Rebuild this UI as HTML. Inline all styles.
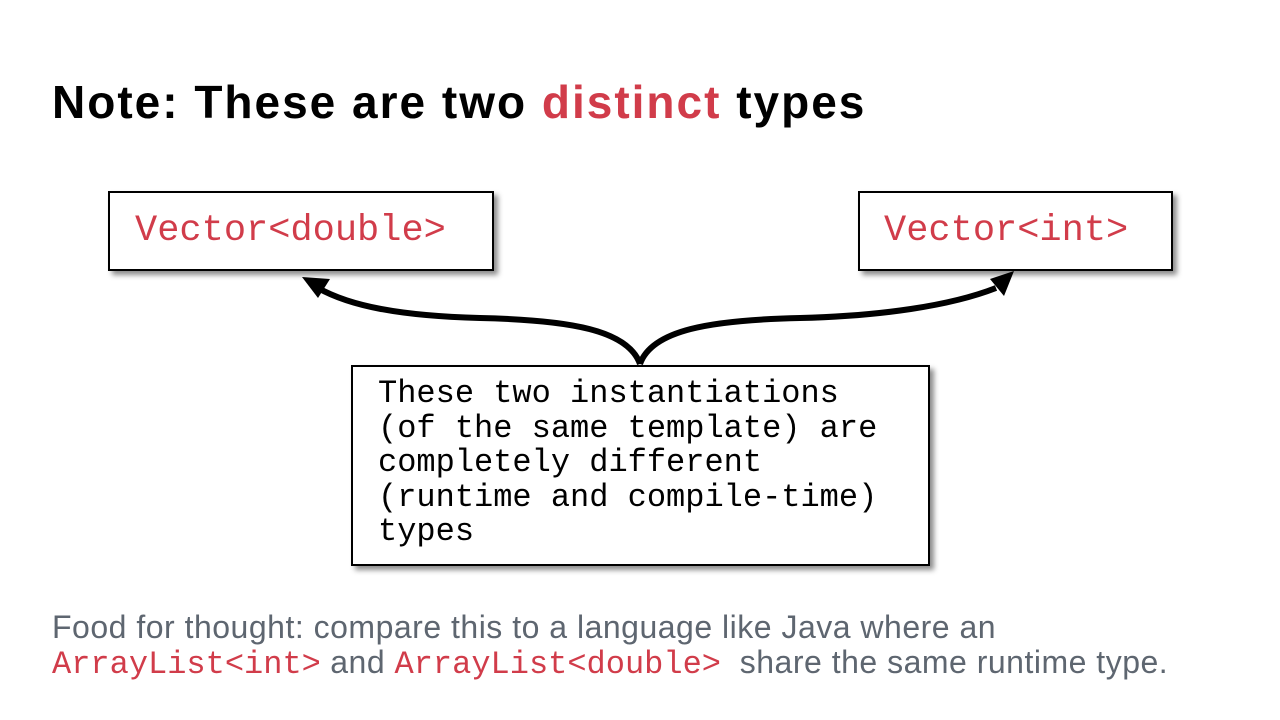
<!DOCTYPE html>
<html><head><style>
body{margin:0;width:1280px;height:720px;background:#fff;position:relative;overflow:hidden;font-family:"Liberation Sans",sans-serif}
.t{position:absolute;left:52px;top:75px;font-size:46px;font-weight:bold;color:#000;white-space:nowrap;letter-spacing:2px}
.box{position:absolute;border:2px solid #000;background:#fff;box-shadow:4px 4px 5px rgba(0,0,0,.45);box-sizing:border-box}
.m{font-family:"Liberation Mono",monospace}
.red{color:#d13c4a}
.f{position:absolute;left:52px;top:610px;font-size:32px;color:#5e6670;line-height:35px;white-space:nowrap;letter-spacing:0.5px}
.f .m{letter-spacing:0}
</style></head><body>
<div class="t">Note: These are two <span class="red">distinct</span> types</div>
<svg width="1280" height="720" style="position:absolute;left:0;top:0">
<path d="M640,364 C628,330 570,320 480,318 C400,316 350,306 318,288" fill="none" stroke="#000" stroke-width="6"/>
<path d="M640,364 C652,330 710,320 800,318 C880,316 950,306 996,288" fill="none" stroke="#000" stroke-width="6"/>
<polygon points="302,277 330,279 318,298" fill="#000"/>
<polygon points="1014,271 1004,296 990,279" fill="#000"/>
</svg>
<div class="box" style="left:108px;top:191px;width:386px;height:80px"><div class="m red" style="position:absolute;left:25px;top:17px;font-size:37px">Vector&lt;double&gt;</div></div>
<div class="box" style="left:858px;top:191px;width:315px;height:80px"><div class="m red" style="position:absolute;left:24px;top:17px;font-size:37px">Vector&lt;int&gt;</div></div>
<div class="box" style="left:351px;top:365px;width:579px;height:201px"><div class="m" style="position:absolute;left:25px;top:10px;font-size:32px;line-height:34.5px;white-space:pre">These two instantiations
(of the same template) are
completely different
(runtime and compile-time)
types</div></div>
<div class="f">Food for thought: compare this to a language like Java where an<br><span class="m red" style="font-size:32px">ArrayList&lt;int&gt;</span> and <span class="m red" style="font-size:32px">ArrayList&lt;double&gt;</span>&nbsp; share the same runtime type.</div>
</body></html>
